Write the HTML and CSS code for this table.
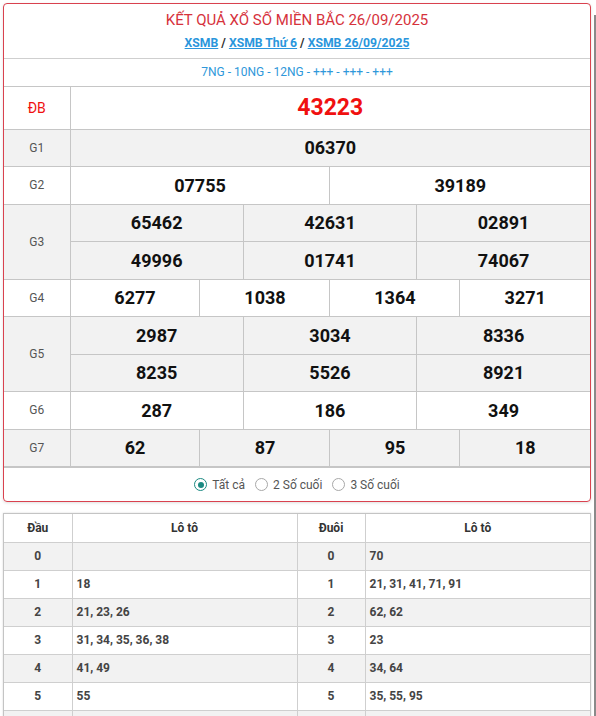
FILE: index.html
```html
<!DOCTYPE html>
<html lang="vi">
<head>
<meta charset="utf-8">
<title>KQXS Miền Bắc</title>
<link rel="stylesheet" href="styles.css">
</head>
<body>
<div class="page">
  <main class="main">
    <section class="card result">
      <header class="head">
        <h1 class="title">KẾT QUẢ XỔ SỐ MIỀN BẮC 26/09/2025</h1>
        <div class="crumbs"><a href="#">XSMB</a> / <a href="#">XSMB Thứ 6</a> / <a href="#">XSMB 26/09/2025</a></div>
      </header>
      <div class="codes">7NG - 10NG - 12NG - +++ - +++ - +++</div>
      <table class="prizes">
        <colgroup>
          <col class="c-label">
          <col span="12">
        </colgroup>
        <tr class="r-db">
          <td class="lbl lbl-db">ĐB</td>
          <td colspan="12" class="num num-db">43223</td>
        </tr>
        <tr class="alt">
          <td class="lbl">G1</td>
          <td colspan="12" class="num">06370</td>
        </tr>
        <tr>
          <td class="lbl">G2</td>
          <td colspan="6" class="num">07755</td>
          <td colspan="6" class="num">39189</td>
        </tr>
        <tr class="alt">
          <td class="lbl" rowspan="2">G3</td>
          <td colspan="4" class="num">65462</td>
          <td colspan="4" class="num">42631</td>
          <td colspan="4" class="num">02891</td>
        </tr>
        <tr class="alt">
          <td colspan="4" class="num">49996</td>
          <td colspan="4" class="num">01741</td>
          <td colspan="4" class="num">74067</td>
        </tr>
        <tr>
          <td class="lbl">G4</td>
          <td colspan="3" class="num">6277</td>
          <td colspan="3" class="num">1038</td>
          <td colspan="3" class="num">1364</td>
          <td colspan="3" class="num">3271</td>
        </tr>
        <tr class="alt">
          <td class="lbl" rowspan="2">G5</td>
          <td colspan="4" class="num">2987</td>
          <td colspan="4" class="num">3034</td>
          <td colspan="4" class="num">8336</td>
        </tr>
        <tr class="alt">
          <td colspan="4" class="num">8235</td>
          <td colspan="4" class="num">5526</td>
          <td colspan="4" class="num">8921</td>
        </tr>
        <tr>
          <td class="lbl">G6</td>
          <td colspan="4" class="num">287</td>
          <td colspan="4" class="num">186</td>
          <td colspan="4" class="num">349</td>
        </tr>
        <tr class="alt">
          <td class="lbl">G7</td>
          <td colspan="3" class="num">62</td>
          <td colspan="3" class="num">87</td>
          <td colspan="3" class="num">95</td>
          <td colspan="3" class="num">18</td>
        </tr>
      </table>
      <div class="filters">
        <label class="opt"><span class="radio checked"></span>Tất cả</label>
        <label class="opt"><span class="radio"></span>2 Số cuối</label>
        <label class="opt"><span class="radio"></span>3 Số cuối</label>
      </div>
    </section>

    <section class="card loto">
      <table class="lototable">
        <colgroup>
          <col class="c-head"><col class="c-val"><col class="c-head"><col class="c-val">
        </colgroup>
        <tr class="th">
          <th>Đầu</th><th>Lô tô</th><th>Đuôi</th><th>Lô tô</th>
        </tr>
        <tr class="alt"><td class="k">0</td><td class="v"></td><td class="k">0</td><td class="v">70</td></tr>
        <tr><td class="k">1</td><td class="v">18</td><td class="k">1</td><td class="v">21, 31, 41, 71, 91</td></tr>
        <tr class="alt"><td class="k">2</td><td class="v">21, 23, 26</td><td class="k">2</td><td class="v">62, 62</td></tr>
        <tr><td class="k">3</td><td class="v">31, 34, 35, 36, 38</td><td class="k">3</td><td class="v">23</td></tr>
        <tr class="alt"><td class="k">4</td><td class="v">41, 49</td><td class="k">4</td><td class="v">34, 64</td></tr>
        <tr><td class="k">5</td><td class="v">55</td><td class="k">5</td><td class="v">35, 55, 95</td></tr>
        <tr class="alt spacer"><td></td><td></td><td></td><td></td></tr>
      </table>
    </section>
  </main>
  <aside class="side"></aside>
</div>
</body>
</html>
```

FILE: styles.css
```css
* { box-sizing: border-box; }
html, body { margin: 0; padding: 0; background: #fff; }
body {
  font-family: Roboto, "Liberation Sans", Arial, sans-serif;
  color: #222;
  overflow: hidden;
}
.page {
  display: flex;
  padding: 3px 0 0 3px;
  gap: 3px;
}
.main {
  width: 588px;
  display: flex;
  flex-direction: column;
  gap: 11px;
}
.side {
  width: 2px;
  margin-top: 12px;
  height: 720px;
  background: #8a8a8a;
}
.card.result {
  border: 1px solid #d9424f;
  border-radius: 4px;
  overflow: hidden;
  box-shadow: 0 1px 3px rgba(0,0,0,0.12);
}
.head {
  text-align: center;
  padding: 7px 0 0;
  height: 55px;
  border-bottom: 1px solid #cfcfcf;
}
.title {
  margin: 0;
  font-size: 15px;
  font-weight: 400;
  color: #d6323c;
  line-height: 19px;
}
.crumbs {
  margin-top: 4px;
  font-size: 12.2px;
  font-weight: 700;
  color: #2d2d2d;
  line-height: 18px;
}
.crumbs a {
  color: #2a96dc;
  text-decoration: underline;
}
.codes {
  text-align: center;
  font-size: 12px;
  color: #2f98da;
  height: 28px;
  line-height: 27px;
  border-bottom: 1px solid #c6c6c6;
}
.prizes {
  width: 100%;
  border-collapse: collapse;
  table-layout: fixed;
}
.prizes col.c-label { width: 66px; }
.prizes td {
  border: 1px solid #c6c6c6;
  text-align: center;
  height: 37.5px;
  padding: 0;
}
.prizes tr:first-child td { border-top: 0; }
.prizes td:first-child { border-left: 0; }
.prizes td:last-child { border-right: 0; }
.prizes tr.alt td { background: #f2f2f2; }
.prizes .r-db td { height: 42px; }
.lbl {
  font-size: 12px;
  color: #555;
}
.lbl-db {
  color: #f01010;
  font-size: 14px;
}
.num {
  font-size: 18px;
  font-weight: 700;
  color: #111;
}
.num-db {
  font-size: 23px;
  color: #f01010;
}
.filters {
  display: flex;
  justify-content: center;
  gap: 10px;
  height: 34px;
  align-items: center;
  border-top: 1px solid #c6c6c6;
  font-size: 12px;
  color: #555;
}
.opt {
  display: flex;
  align-items: center;
  gap: 5px;
}
.radio {
  width: 13px;
  height: 13px;
  border-radius: 50%;
  border: 1px solid #a8a8a8;
  background: #fff;
  position: relative;
}
.radio.checked { border-color: #1b8a82; }
.radio.checked::after {
  content: "";
  position: absolute;
  left: 2.5px; top: 2.5px;
  width: 6px; height: 6px;
  border-radius: 50%;
  background: #1b8a82;
}
.card.loto {
  border: 1px solid #c4c4c4;
  border-bottom: 0;
  box-shadow: 0 0 2px rgba(0,0,0,0.15);
}
.lototable {
  width: 100%;
  border-collapse: collapse;
  table-layout: fixed;
  font-size: 12px;
}
.lototable col.c-head { width: 68px; }
.lototable th, .lototable td {
  border: 1px solid #cfcfcf;
  height: 28px;
  padding: 0;
}
.lototable tr:first-child th { border-top: 0; }
.lototable th:first-child, .lototable td:first-child { border-left: 0; }
.lototable th:last-child, .lototable td:last-child { border-right: 0; }
.lototable th {
  font-weight: 700;
  color: #333;
  text-align: center;
}
.lototable tr.alt td { background: #f2f2f2; }
.lototable .k {
  text-align: center;
  font-weight: 700;
  color: #444;
}
.lototable .v {
  text-align: left;
  padding-left: 4px;
  font-weight: 700;
  color: #444;
}
```
